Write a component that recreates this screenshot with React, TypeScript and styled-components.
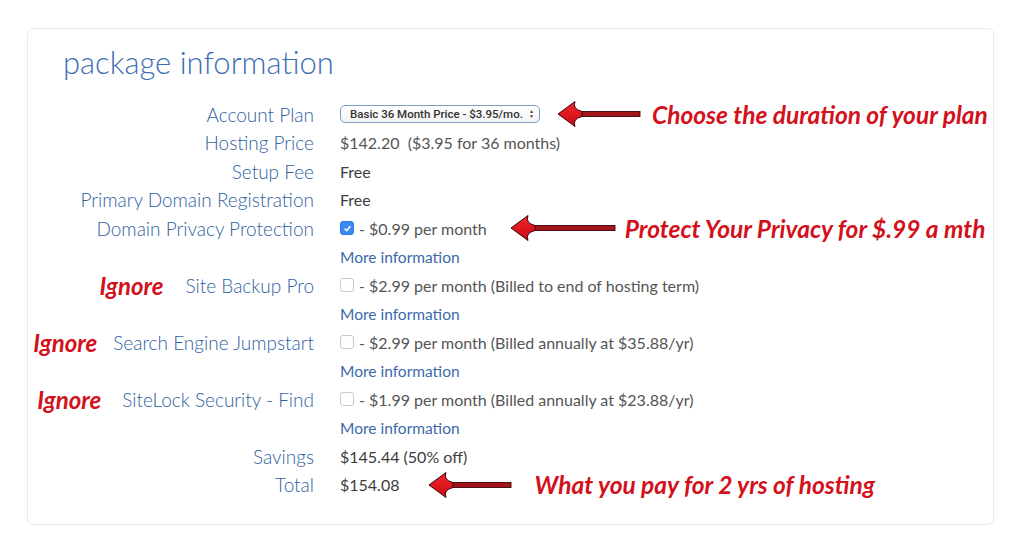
import React from "react";
import styled, { createGlobalStyle } from "styled-components";

const GlobalStyle = createGlobalStyle`
  html, body {
    margin: 0;
    padding: 0;
    background: #fff;
  }
  body {
    font-family: Lato, "Open Sans", sans-serif;
    width: 1024px;
    height: 547px;
    overflow: hidden;
  }
`;

type Note = { text: string; arrow: number; offset: number; gap: number };

type Item = {
  label: string;
  ignore?: number;
  value?: React.ReactNode;
  note?: Note;
  more?: boolean;
};

function Arrow({ width }: { width: number }) {
  return (
    <svg width={width} height={28} viewBox={`0 0 ${width} 28`}>
      <defs>
        <linearGradient id={`head${width}`} x1="0" y1="0" x2="0" y2="1">
          <stop offset="0" stopColor="#f0262b" />
          <stop offset="1" stopColor="#c70a12" />
        </linearGradient>
      </defs>
      <rect
        x={20}
        y={11.5}
        width={width - 21}
        height={5}
        fill="#a3141a"
        stroke="#3d0507"
        strokeWidth={0.9}
      />
      <path
        d="M1 14 L18 1.5 Q15 9 25 11.5 L25 16.5 Q15 19 18 26.5 Z"
        fill={`url(#head${width})`}
        stroke="#3d0507"
        strokeWidth={1}
        strokeLinejoin="round"
      />
    </svg>
  );
}

export default function App() {
  const rows: Item[] = [
    {
      label: "Account Plan",
      value: (
        <FakeSelect>
          Basic 36 Month Price - $3.95/mo.
          <Spinner>
            <span>▲</span>
            <span>▼</span>
          </Spinner>
        </FakeSelect>
      ),
      note: { text: "Choose the duration of your plan", arrow: 84, offset: 17, gap: 11 },
    },
    {
      label: "Hosting Price",
      value: <Muted>$142.20&nbsp;&nbsp;($3.95 for 36 months)</Muted>,
    },
    { label: "Setup Fee", value: "Free" },
    { label: "Primary Domain Registration", value: "Free" },
    {
      label: "Domain Privacy Protection",
      value: (
        <CheckLine>
          <Box checked>
            <svg width="9" height="9" viewBox="0 0 10 10">
              <path d="M2 5.2 L4.2 7.4 L8.2 2.6" fill="none" stroke="#fff" strokeWidth="1.8" />
            </svg>
          </Box>
          <Muted>- $0.99 per month</Muted>
        </CheckLine>
      ),
      note: { text: "Protect Your Privacy for $.99 a mth", arrow: 106, offset: 23, gap: 9 },
      more: true,
    },
    {
      label: "Site Backup Pro",
      ignore: 22,
      value: (
        <CheckLine>
          <Box />
          <Muted>- $2.99 per month (Billed to end of hosting term)</Muted>
        </CheckLine>
      ),
      more: true,
    },
    {
      label: "Search Engine Jumpstart",
      ignore: 16,
      value: (
        <CheckLine>
          <Box />
          <Muted>- $2.99 per month (Billed annually at $35.88/yr)</Muted>
        </CheckLine>
      ),
      more: true,
    },
    {
      label: "SiteLock Security - Find",
      ignore: 21,
      value: (
        <CheckLine>
          <Box />
          <Muted>- $1.99 per month (Billed annually at $23.88/yr)</Muted>
        </CheckLine>
      ),
      more: true,
    },
    { label: "Savings", value: "$145.44 (50% off)" },
    {
      label: "Total",
      value: "$154.08",
      note: { text: "What you pay for 2 yrs of hosting", arrow: 84, offset: 29, gap: 22 },
    },
  ];

  return (
    <>
      <GlobalStyle />
      <Card>
        <Title>package information</Title>
        <Table>
          {rows.map((r) => (
            <React.Fragment key={r.label}>
              <Label>
                {r.ignore && <Ignore $gap={r.ignore}>Ignore</Ignore>}
                {r.label}
              </Label>
              <Value>
                {r.value}
                {r.note && (
                  <Annotation $offset={r.note.offset} $gap={r.note.gap}>
                    <Arrow width={r.note.arrow} />
                    <NoteText>{r.note.text}</NoteText>
                  </Annotation>
                )}
              </Value>
              {r.more && (
                <>
                  <span />
                  <Value>
                    <MoreLink href="#">More information</MoreLink>
                  </Value>
                </>
              )}
            </React.Fragment>
          ))}
        </Table>
      </Card>
    </>
  );
}

const Card = styled.div`
  box-sizing: border-box;
  margin: 28px 0 0 27px;
  width: 967px;
  height: 497px;
  border: 1.5px solid #e4edf2;
  border-radius: 6px;
  padding: 12px 0 0 0;
`;

const Title = styled.h1`
  margin: 0 0 17px 35px;
  font-family: Lato, sans-serif;
  font-weight: 300;
  font-size: 31px;
  line-height: 42px;
  color: #3b6db3;
`;

const Table = styled.div`
  display: grid;
  grid-template-columns: 286px 1fr;
  grid-auto-rows: 28.5px;
  column-gap: 26px;
`;

const Label = styled.div`
  display: flex;
  align-items: center;
  justify-content: flex-end;
  font-family: Lato, sans-serif;
  font-weight: 300;
  font-size: 19px;
  color: #2f61a0;
  white-space: nowrap;
`;

const Ignore = styled.span<{ $gap: number }>`
  margin-right: ${(p) => p.$gap}px;
  font-family: Lato, sans-serif;
  font-weight: 700;
  font-style: italic;
  font-size: 24px;
  color: #d3111c;
`;

const Value = styled.div`
  display: flex;
  align-items: center;
  font-family: Lato, sans-serif;
  font-size: 16px;
  color: #3d3d3d;
  white-space: nowrap;
`;

const Muted = styled.span`
  color: #555;
`;

const CheckLine = styled.div`
  display: flex;
  align-items: center;
  gap: 5px;
`;

const Box = styled.span<{ checked?: boolean }>`
  box-sizing: border-box;
  display: inline-flex;
  align-items: center;
  justify-content: center;
  width: 14px;
  height: 14px;
  border-radius: 3px;
  background: ${(p) => (p.checked ? "#3b8af4" : "#fff")};
  border: 1px solid ${(p) => (p.checked ? "#2f7de8" : "#c9c9c9")};
`;

const FakeSelect = styled.div`
  box-sizing: border-box;
  display: flex;
  align-items: center;
  justify-content: space-between;
  width: 200px;
  height: 18px;
  padding: 0 5px 0 9px;
  border: 1px solid #7f9dc2;
  border-radius: 5px;
  background: linear-gradient(#ffffff, #f3f3f3);
  font-family: Roboto, "Liberation Sans", sans-serif;
  font-size: 11.5px;
  font-weight: 500;
  color: #333;
`;

const Spinner = styled.span`
  display: flex;
  flex-direction: column;
  font-size: 5px;
  line-height: 5px;
  color: #444;
`;

const Annotation = styled.div<{ $offset: number; $gap: number }>`
  display: flex;
  align-items: center;
  gap: ${(p) => p.$gap}px;
  margin-left: ${(p) => p.$offset}px;
`;

const NoteText = styled.span`
  font-family: Lato, sans-serif;
  font-weight: 700;
  font-style: italic;
  font-size: 24.5px;
  color: #d3111c;
`;

const MoreLink = styled.a`
  color: #3c6aa8;
  text-decoration: none;
  font-size: 15.5px;
`;
